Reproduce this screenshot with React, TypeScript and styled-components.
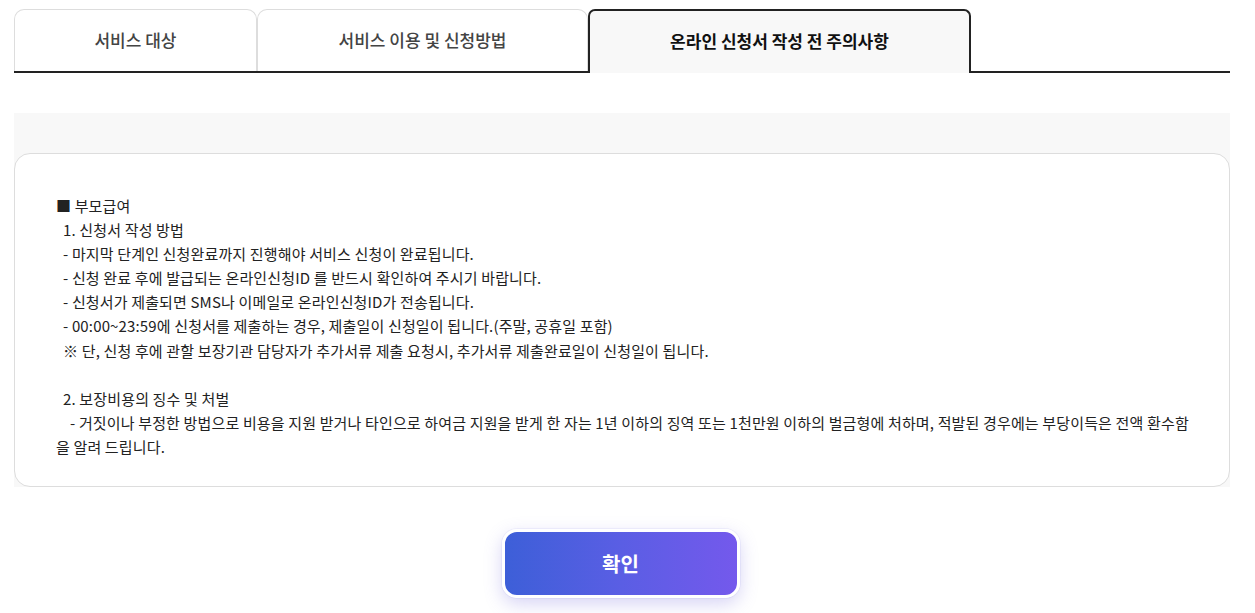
import React, { useState } from "react";
import styled, { createGlobalStyle } from "styled-components";

const Global = createGlobalStyle`
  html, body { margin: 0; padding: 0; background: #fff; }
  body { font-family: "Noto Sans CJK KR", "Noto Sans", sans-serif; color: #222; }
`;

const Page = styled.div`
  width: 1216px;
  padding: 9px 0 20px 14px;
`;

const TabBar = styled.div`
  display: flex;
  align-items: flex-start;
  height: 62px;
  border-bottom: 2px solid #222;
  box-sizing: content-box;
`;

const Tab = styled.button<{ $active?: boolean; $w: number }>`
  width: ${(p) => p.$w}px;
  box-sizing: border-box;
  height: ${(p) => (p.$active ? 64 : 62)}px;
  padding: 0 0 ${(p) => (p.$active ? 4 : 2)}px;
  font-family: "Noto Sans CJK KR", "Noto Sans", sans-serif;
  font-size: 17px;
  font-weight: ${(p) => (p.$active ? 700 : 500)};
  color: ${(p) => (p.$active ? "#111" : "#444")};
  background: ${(p) => (p.$active ? "#f8f8f8" : "#fff")};
  border: ${(p) => (p.$active ? "2px solid #222" : "1px solid #ddd")};
  border-bottom: none;
  border-radius: ${(p) => (p.$active ? "7px 7px 0 0" : "10px 10px 0 0")};
  position: relative;
  z-index: ${(p) => (p.$active ? 1 : 0)};
  cursor: pointer;
`;

const Panel = styled.div`
  margin-top: 40px;
  background: #f8f8f8;
  padding-top: 40px;
`;

const Box = styled.div`
  background: #fff;
  border: 1px solid #ddd;
  border-radius: 16px;
  padding: 40px 40px 27px 41px;
  font-size: 15px;
  line-height: 24.1px;
  color: #222;
  white-space: pre-wrap;
  letter-spacing: 0.15px;
`;

const Actions = styled.div`
  display: flex;
  justify-content: center;
  padding-top: 42px;
`;

const Confirm = styled.button`
  width: 238px;
  height: 69px;
  flex: none;
  margin-left: -3px;
  border: 3px solid #fff;
  border-radius: 15px;
  background: linear-gradient(90deg, #3d5fd8 0%, #5a5ee4 50%, #7459ec 100%);
  color: #fff;
  font-family: "Noto Sans CJK KR", "Noto Sans", sans-serif;
  font-size: 20px;
  font-weight: 700;
  box-shadow: 0 6px 18px rgba(110, 100, 220, 0.28), 0 0 0 1px rgba(120, 110, 230, 0.08);
  cursor: pointer;
`;

const tabs = [
  { label: "서비스 대상", w: 243 },
  { label: "서비스 이용 및 신청방법", w: 331 },
  { label: "온라인 신청서 작성 전 주의사항", w: 383 },
];

const text = `■ 부모급여
  1. 신청서 작성 방법
  - 마지막 단계인 신청완료까지 진행해야 서비스 신청이 완료됩니다.
  - 신청 완료 후에 발급되는 온라인신청ID 를 반드시 확인하여 주시기 바랍니다.
  - 신청서가 제출되면 SMS나 이메일로 온라인신청ID가 전송됩니다.
  - 00:00~23:59에 신청서를 제출하는 경우, 제출일이 신청일이 됩니다.(주말, 공휴일 포함)
  ※ 단, 신청 후에 관할 보장기관 담당자가 추가서류 제출 요청시, 추가서류 제출완료일이 신청일이 됩니다.

  2. 보장비용의 징수 및 처벌
    - 거짓이나 부정한 방법으로 비용을 지원 받거나 타인으로 하여금 지원을 받게 한 자는 1년 이하의 징역 또는 1천만원 이하의 벌금형에 처하며, 적발된 경우에는 부당이득은 전액 환수함을 알려 드립니다.`;

export default function App() {
  const [active, setActive] = useState(2);
  return (
    <>
      <Global />
      <Page>
        <TabBar>
          {tabs.map((t, i) => (
            <Tab key={t.label} $w={t.w} $active={i === active} onClick={() => setActive(i)}>
              {t.label}
            </Tab>
          ))}
        </TabBar>
        <Panel>
          <Box>{text}</Box>
        </Panel>
        <Actions>
          <Confirm>확인</Confirm>
        </Actions>
      </Page>
    </>
  );
}
